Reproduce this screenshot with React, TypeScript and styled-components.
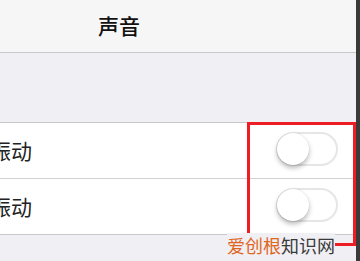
import React from "react";
import styled, { createGlobalStyle } from "styled-components";

const Global = createGlobalStyle`
  html, body { margin: 0; padding: 0; }
  body {
    width: 360px;
    height: 261px;
    overflow: hidden;
    background: #efeff4;
    font-family: "Noto Sans CJK SC", "Noto Sans", sans-serif;
  }
`;

const Page = styled.div`
  position: relative;
  display: flex;
  width: 360px;
  height: 261px;
  overflow: hidden;
`;

const Main = styled.div`
  flex: 1;
  display: flex;
  flex-direction: column;
  background: #efeff4;
`;

const Strip = styled.div`
  width: 4px;
  background: #3a3a3a;
`;

const Header = styled.div`
  height: 52px;
  border-bottom: 1px solid #c8c7cc;
  background: #f6f6f7;
  display: flex;
  align-items: center;
  padding-left: 98px;
`;

const Title = styled.div`
  font-size: 21px;
  font-weight: 500;
  color: #111;
  line-height: 1;
  margin-top: -2px;
`;

const Spacer = styled.div`
  height: 69px;
`;

const Group = styled.div`
  background: #fff;
  border-top: 1px solid #c8c7cc;
  border-bottom: 1px solid #c8c7cc;
`;

const Row = styled.div<{ $last?: boolean }>`
  height: 55px;
  display: flex;
  align-items: center;
  justify-content: space-between;
  padding-right: 18px;
  border-bottom: ${(p) => (p.$last ? "none" : "1px solid #d2d2d6")};
`;

const Label = styled.div`
  font-size: 21px;
  color: #222;
  margin-left: -10px;
  line-height: 1;
`;

const Track = styled.div`
  position: relative;
  width: 58px;
  height: 30px;
  border: 2px solid #e6e6e6;
  border-radius: 17px;
  background: #fff;
  margin-bottom: 4px;
`;

const Knob = styled.div`
  position: absolute;
  left: -1px;
  top: -1px;
  width: 32px;
  height: 32px;
  border-radius: 50%;
  background: #fff;
  box-shadow: 0 3px 5px rgba(0, 0, 0, 0.28), 0 0 1px rgba(0, 0, 0, 0.15);
`;

const RedBox = styled.div`
  position: absolute;
  left: 247px;
  top: 122px;
  width: 103px;
  height: 118px;
  border: 3px solid #ee1c25;
  pointer-events: none;
`;

const Watermark = styled.div`
  position: absolute;
  left: 227px;
  top: 233px;
  width: 108px;
  height: 24px;
  background: #efeff4;
  font-size: 18px;
  line-height: 24px;
  color: #3a3a3a;
  white-space: nowrap;
`;

const Orange = styled.span`
  color: #e0661e;
`;

function Switch() {
  return (
    <Track>
      <Knob />
    </Track>
  );
}

export default function App() {
  return (
    <Page>
      <Global />
      <Main>
        <Header>
          <Title>声音</Title>
        </Header>
        <Spacer />
        <Group>
          <Row>
            <Label>振动</Label>
            <Switch />
          </Row>
          <Row $last>
            <Label>振动</Label>
            <Switch />
          </Row>
        </Group>
      </Main>
      <Strip />
      <RedBox />
      <Watermark>
        <Orange>爱创根</Orange>知识网
      </Watermark>
    </Page>
  );
}
